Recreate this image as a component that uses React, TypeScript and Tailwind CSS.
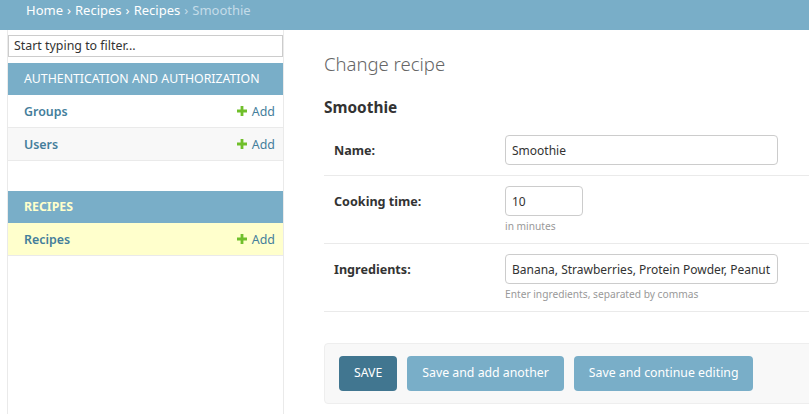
const font = { fontFamily: '"Noto Sans", "Open Sans", sans-serif' };

function AddIcon() {
  return (
    <svg width="10" height="10" viewBox="0 0 10 10" className="mb-[2px]">
      <path d="M3.6 0h2.8v3.6H10v2.8H6.4V10H3.6V6.4H0V3.6h3.6z" fill="#70bf2b" />
    </svg>
  );
}

function NavRow({ label, striped, current }: { label: string; striped?: boolean; current?: boolean }) {
  const bg = current ? 'bg-[#ffffcc]' : striped ? 'bg-[#f8f8f8]' : 'bg-white';
  return (
    <div className={`flex h-[33px] items-center justify-between border-b border-[#eaeaea] pl-[16px] pr-[8px] pt-[2px] text-[12.4px] ${bg}`}>
      <span className="font-semibold text-[#447e9b]">{label}</span>
      <span className="flex items-center gap-[5px] text-[#447e9b]">
        <AddIcon />
        Add
      </span>
    </div>
  );
}

function FormRow({
  label,
  value,
  width,
  help,
}: {
  label: string;
  value: string;
  width: string;
  help?: string;
}) {
  return (
    <div className="flex border-b border-[#eaeaea] p-[10px]">
      <label className="w-[171px] shrink-0 pt-[6px] text-[12.6px] font-bold leading-[20px] text-[#333]">{label}</label>
      <div className="flex flex-col">
        <div
          className={`h-[30px] overflow-hidden whitespace-nowrap rounded-[4px] border border-[#cccccc] px-[6px] pt-[1px] text-[12px] leading-[27px] text-[#333] ${width}`}
        >
          {value}
        </div>
        {help && <div className="pt-[3px] text-[10.2px] leading-[14px] text-[#999]">{help}</div>}
      </div>
    </div>
  );
}

export default function App() {
  return (
    <div className="h-[414px] w-[809px] overflow-hidden bg-white text-[#333]" style={font}>
      {/* breadcrumbs */}
      <div className="flex h-[30px] items-start bg-[#79aec8] pl-[26px] text-[13px] leading-[20px] text-white">
        <span>Home</span>
        <span className="px-[4px]">›</span>
        <span>Recipes</span>
        <span className="px-[4px]">›</span>
        <span>Recipes</span>
        <span className="px-[4px] text-[#c4dce8]">›</span>
        <span className="text-[#c4dce8]">Smoothie</span>
      </div>

      <div className="flex h-[384px]">
        {/* sidebar toggle strip */}
        <div className="w-[8px] shrink-0 border-r border-[#eaeaea]" />

        <nav className="w-[276px] shrink-0 border-r border-[#eaeaea]">
          <div className="mt-[5px] mb-[6px] h-[22px] border border-[#cccccc] px-[5px] text-[12.4px] leading-[20px] text-[#333]">
            Start typing to filter...
          </div>

          <div className="flex h-[32px] items-center bg-[#79aec8] pl-[16px] pt-[1px] text-[12.3px] uppercase text-white">
            Authentication and Authorization
          </div>
          <NavRow label="Groups" />
          <NavRow label="Users" striped />

          <div className="mt-[30px] flex h-[32px] items-center bg-[#79aec8] pl-[16px] pt-[1px] text-[12.3px] font-bold uppercase text-[#ffffcc]">
            Recipes
          </div>
          <NavRow label="Recipes" current />
        </nav>

        <main className="w-[560px] shrink-0 pl-[40px]">
          <h1 className="mt-[23px] text-[18.5px] font-light leading-[22px] text-[#666]">Change recipe</h1>
          <h2 className="mt-[22px] text-[15.4px] font-bold leading-[22px] text-[#333]">Smoothie</h2>

          <div className="mt-[6px]">
            <FormRow label="Name:" value="Smoothie" width="w-[273px]" />
            <FormRow label="Cooking time:" value="10" width="w-[78px]" help="in minutes" />
            <FormRow
              label="Ingredients:"
              value="Banana, Strawberries, Protein Powder, Peanut"
              width="w-[273px]"
              help="Enter ingredients, separated by commas"
            />
          </div>

          <div className="mt-[31px] flex gap-[10px] rounded-[4px] border border-[#eeeeee] bg-[#f8f8f8] px-[14px] py-[12px] text-[12.3px] text-white">
            <button className="h-[35px] rounded-[4px] bg-[#417690] px-[15px] uppercase">Save</button>
            <button className="h-[35px] rounded-[4px] bg-[#79aec8] px-[15px]">Save and add another</button>
            <button className="h-[35px] rounded-[4px] bg-[#79aec8] px-[15px]">Save and continue editing</button>
          </div>
        </main>
      </div>
    </div>
  );
}
